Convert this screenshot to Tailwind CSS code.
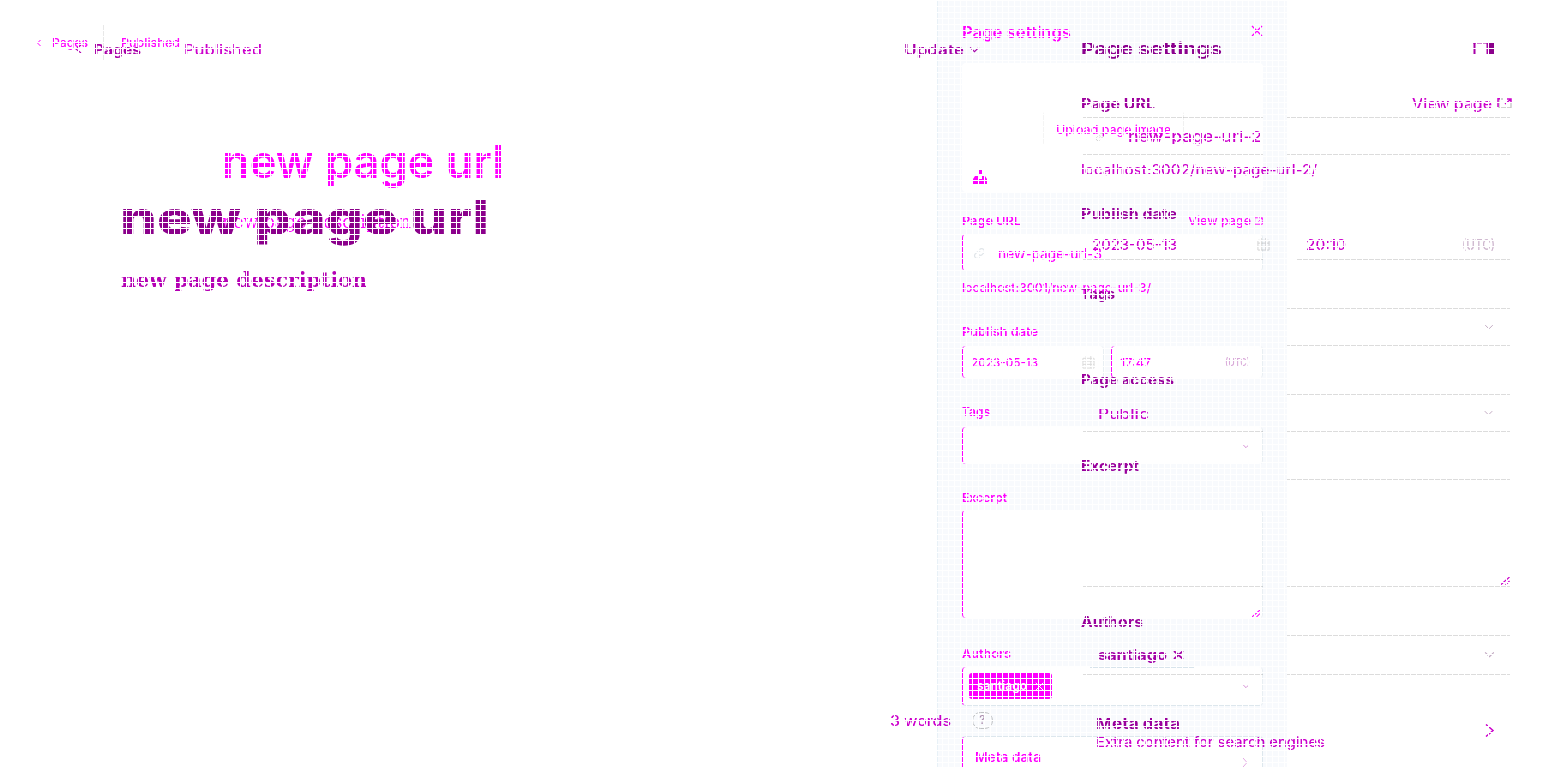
<!DOCTYPE html>
<html lang="en">
<head>
<meta charset="utf-8">
<title>Page settings</title>
<script src="https://cdn.jsdelivr.net/npm/@tailwindcss/browser@4"></script>
</head>
<body class="relative h-[767px] w-[1544px] overflow-hidden bg-white font-['Inter',sans-serif]">

<svg class="hidden">
  <symbol id="down" viewBox="0 0 12 8"><path d="M1 1.5 6 6.5 11 1.5" fill="none" stroke="currentColor" stroke-width="1.3"/></symbol>
  <symbol id="link" viewBox="0 0 14 14"><path d="M6 8a3 3 0 0 0 4 0l2-2a3 3 0 0 0-4-4L7 3M8 6a3 3 0 0 0-4 0L2 8a3 3 0 0 0 4 4l1-1" fill="none" stroke="currentColor" stroke-width="1.3"/></symbol>
  <symbol id="out" viewBox="0 0 14 12"><path d="M6 1H1v10h12V6M8 1h5v4M13 1 7 7" fill="none" stroke="currentColor" stroke-width="1.4"/></symbol>
  <symbol id="out-soft" viewBox="0 0 15 11"><path d="M6 1H2v9h12V5" fill="none" stroke="#c4c4c4" stroke-width="1.300"/><path d="M3 .8H1V9M9 1h5v4M14 1 8 6" fill="none" stroke="currentColor" stroke-width="1.500"/></symbol>
  <symbol id="cal" viewBox="0 0 14 14"><path d="M1 2.5h12v10.500H1zM1 5.500h12M1 9h12M4.500 0v13M9.500 0v13" fill="none" stroke="currentColor"/></symbol>
  <symbol id="x" viewBox="0 0 12 12"><path d="M1 1 11 11M11 1 1 11" fill="none" stroke="currentColor" stroke-width="1.3"/></symbol>
  <symbol id="grip" viewBox="0 0 9 8"><path d="M0 8 9 0M5 8 9 4" fill="none" stroke="currentColor" stroke-width="1.200"/></symbol>
</svg>

<!-- First document: editor and settings panel -->
<div class="absolute inset-0 flex text-[#ff00ff]">
  <main class="w-[937px] shrink-0">
    <div class="mt-[25px] flex h-[35px] items-center pl-[37px] text-[12px] font-medium">
      <svg class="h-[6px] w-[4px]" viewBox="0 0 4 6"><path d="M3.500 0 .5 3l3 3" fill="none" stroke="currentColor"/></svg>
      <span class="ml-[11px] whitespace-nowrap" data-w="36">Pages</span>
      <i class="ml-[15px] h-[35px] w-px bg-[#e8e8e8]"></i>
      <span class="ml-[17px] whitespace-nowrap" data-w="59">Published</span>
    </div>
    <h1 class="mt-[74px] ml-[222px] text-[46px] leading-[54px] font-semibold whitespace-nowrap"><span data-w="282">new page url</span></h1>
    <p class="mt-[24px] ml-[222px] font-['DejaVu_Serif',serif] text-[18px] leading-[20px] whitespace-nowrap"><span data-w="189">new page description</span></p>
  </main>
  <aside class="flex h-[767px] w-[350px] shrink-0 flex-col border-l border-[#e8f1f7] bg-[#f8fafd] pt-[22px] pr-[24px] pl-[24px] text-[12px] font-medium">
    <div class="flex h-5 shrink-0 items-center justify-between text-[16px] font-semibold"><span data-w="109">Page settings</span><svg class="mb-[2px] h-3 w-3"><use href="#x"/></svg></div>
    <div class="mt-[21px] h-[129px] shrink-0 rounded bg-white pt-[48px]">
      <div class="ml-[81px] flex h-[35px] w-[141px] items-center rounded border border-transparent border-r-[#f0f0f0] border-l-[#f4f4f4] pt-[2px] pl-[12px]"><span data-w="115">Upload page image</span></div>
      <svg class="mt-[24px] ml-[11px] h-[14px] w-[14px]" viewBox="0 0 14 14"><path d="M6 0h3v4H6zM2 6h3v3h4V6h3l2 3v5H0V9z" fill="currentColor"/></svg>
    </div>
    <div class="mt-[19px] flex h-5 shrink-0 items-center font-semibold"><span data-w="59">Page URL</span><span class="ml-auto font-medium" data-w="63">View page</span><svg class="ml-[3px] h-[8px] w-[9px]"><use href="#out"/></svg></div>
    <div class="mt-[3px] flex h-[37px] shrink-0 items-center rounded border-r border-l border-r-[#e9eff3] border-l-[#ff00ff] bg-white pt-px pl-[10px] text-[14px]"><svg class="h-[13px] w-[13px] text-[#e0e5e9]"><use href="#link"/></svg><span class="ml-[12px]" data-w="104">new-page-url-3</span></div>
    <div class="mt-[7px] flex h-5 shrink-0 items-center"><span data-w="189">localhost:3001/new-page-url-3/</span></div>
    <div class="mt-[23px] flex h-5 shrink-0 items-center pt-px font-semibold"><span data-w="76">Publish date</span></div>
    <div class="mt-[5px] flex h-[32px] shrink-0 gap-[7px]">
      <div class="flex w-[142px] items-center rounded border-r border-l border-r-[#e9eff3] border-l-[#ff00ff] bg-white pt-px pr-[8px] pl-[8px]"><span data-w="67">2023-05-13</span><svg class="ml-auto h-[13px] w-[13px] text-[#d8d8d8]"><use href="#cal"/></svg></div>
      <div class="flex flex-1 items-center rounded border-r border-l border-r-[#e9eff3] border-l-[#ff00ff] bg-white pt-px pr-[12px] pl-[8px]"><span data-w="31">17:47</span><span class="ml-auto text-[11px] text-[#d8a8d8]" data-w="25">(UTC)</span></div>
    </div>
    <div class="mt-[24px] flex h-5 shrink-0 items-center font-semibold"><span data-w="28">Tags</span></div>
    <div class="mt-[5px] flex h-[37px] shrink-0 items-center justify-end rounded border-r border-l border-r-[#e9eff3] border-l-[#ff00ff] bg-white pr-[12px]"><svg class="h-[6px] w-[8px] text-[#d080d0]"><use href="#down"/></svg></div>
    <div class="mt-[24px] flex h-5 shrink-0 items-center font-semibold"><span data-w="45">Excerpt</span></div>
    <div class="mt-[2px] flex h-[108px] shrink-0 items-end justify-end rounded border-r border-l border-r-[#e9eff3] border-l-[#ff00ff] bg-white pr-[2px] pb-[1px]"><svg class="h-[7px] w-[8px]"><use href="#grip"/></svg></div>
    <div class="mt-[26px] flex h-5 shrink-0 items-center font-semibold"><span data-w="49">Authors</span></div>
    <div class="mt-[3px] flex h-[39px] shrink-0 items-center rounded border-r border-b border-l border-r-[#e9eff3] border-b-[#dde7ed] border-l-[#ff00ff] bg-white pr-[12px] pl-[6px]">
      <div class="flex h-[26px] w-[83px] items-center rounded-[3px] bg-[#ff00ff] pl-[8px] font-semibold text-white"><span data-w="50">santiago</span><svg class="ml-[8px] h-[9px] w-[9px]"><use href="#x"/></svg></div>
      <svg class="ml-auto h-[6px] w-[8px] text-[#d080d0]"><use href="#down"/></svg>
    </div>
    <div class="mt-[30px] flex h-[44px] shrink-0 items-center rounded border border-[#dde7ed] border-l-[#ff00ff] bg-white pr-[14px] pl-[12px] text-[13px] font-semibold"><span data-w="66">Meta data</span><svg class="mt-[8px] ml-auto h-[9px] w-[6px]" viewBox="0 0 6 9"><path d="m1 0 4 4.500L1 9" fill="none" stroke="#e3a8e3"/></svg></div>
  </aside>
</div>

<!-- Second document, blended over the first -->
<div class="absolute inset-0 flex font-medium text-[#cc00cc] mix-blend-multiply">
  <main class="flex h-[767px] w-[1081px] shrink-0 flex-col">
    <div class="mt-[39px] flex h-5 items-center pl-[75px] text-[14px]">
      <svg class="h-[8px] w-[7px]" viewBox="0 0 7 8"><path d="M6 0 1 4l5 4" fill="none" stroke="#b000b0" stroke-width="1.200"/></svg>
      <span class="ml-[12px] font-bold text-[#a800a8]" data-w="47">Pages</span>
      <span class="ml-[43px]" data-w="78">Published</span>
      <span class="ml-[642px] font-semibold text-[#aa00aa]" data-w="60">Update</span>
      <svg class="ml-[5px] h-[7px] w-[11px] text-[#aa00aa]"><use href="#down"/></svg>
    </div>
    <h1 class="mt-[129px] ml-[120px] text-[48px] leading-[60px] font-extrabold whitespace-nowrap text-[#8b008b]"><span data-w="369">new page url</span></h1>
    <p class="mt-[18px] ml-[121px] font-['DejaVu_Serif',serif] text-[20px] leading-[28px] font-bold whitespace-nowrap text-[#b400b4]"><span data-w="246">new page description</span></p>
    <div class="mt-auto mb-[37px] flex h-5 items-center pl-[890px] text-[14px]"><span data-w="61">3 words</span><span class="ml-[21px] flex h-[17px] w-[21px] items-center justify-center rounded-full border border-[#c4c4c4] text-[12px] text-[#b090b0]">?</span></div>
  </main>
  <aside class="flex w-[431px] shrink-0 flex-col text-[14px]">
    <div class="mt-[39px] flex h-5 items-center text-[17px] font-bold text-[#8f008f]"><span class="mt-[2px]" data-w="141">Page settings</span><svg class="mr-[18px] mb-[2px] ml-auto h-[13px] w-[21px]" viewBox="0 0 21 13"><path d="M0 .5h21M1.500 0v13M14.500 0v13" stroke="#a800a8" stroke-width="2"/><path d="M3 12.500h10" stroke="#c8c8c8"/><path d="M16 0h5v13h-5z" fill="#8b008b"/></svg></div>
    <div class="mt-[35px] flex h-5 items-center pb-[2px]"><span class="font-bold text-[#9d009d]" data-w="74">Page URL</span><span class="ml-auto" data-w="80">View page</span><svg class="ml-[5px] h-[11px] w-[15px]"><use href="#out-soft"/></svg></div>
    <div class="mt-[3px] flex h-px justify-between pr-[2px] pl-[2px]"><i class="w-[180px] bg-[#dcdcdc]"></i><i class="w-[223px] bg-[#dcdcdc]"></i></div>
    <div class="flex h-[36px] items-center pt-[2px] pl-[13px] text-[15px]"><svg class="h-[10px] w-[12px] text-[#d0d0d0]"><use href="#link"/></svg><span class="ml-[22px]" data-w="134">new-page-url-2</span></div>
    <div class="flex h-px justify-between pr-[2px] pl-[2px]"><i class="w-[180px] bg-[#dcdcdc]"></i><i class="w-[223px] bg-[#dcdcdc]"></i></div>
    <div class="mt-[5px] flex h-5 items-center pb-[2px]"><span data-w="236">localhost:3002/new-page-url-2/</span></div>
    <div class="mt-[24px] flex h-5 items-center pb-[2px] font-bold text-[#9d009d]"><span data-w="96">Publish date</span></div>
    <div class="mt-[11px] flex h-5 items-center pb-[2px] pl-[11px] pr-[17px]"><span data-w="85">2023-05-13</span><svg class="ml-[79px] h-[13px] w-[15px] text-[#d0d0d0]"><use href="#cal"/></svg><span class="ml-[35px]" data-w="40">20:10</span><span class="ml-auto text-[#cfb8cf]" data-w="33">(UTC)</span></div>
    <div class="mt-[4px] flex h-px justify-between pr-[2px] pl-[2px]"><i class="w-[180px] bg-[#dcdcdc]"></i><i class="w-[213px] bg-[#dcdcdc]"></i></div>
    <div class="mt-[24px] flex h-5 items-center pb-[2px] font-bold text-[#9d009d]"><span data-w="34">Tags</span></div>
    <i class="mt-[4px] mr-[2px] ml-auto h-px w-[223px] bg-[#dcdcdc]"></i>
    <div class="flex h-[36px] items-center justify-end pr-[18px]"><svg class="h-[6px] w-[10px] text-[#c0a8c0]"><use href="#down"/></svg></div>
    <i class="mr-[2px] ml-auto h-px w-[223px] bg-[#dcdcdc]"></i>
    <div class="mt-[24px] flex h-5 items-center pb-[2px] font-bold text-[#9d009d]"><span data-w="93">Page access</span></div>
    <i class="mt-[4px] mr-[2px] ml-auto h-px w-[223px] bg-[#dcdcdc]"></i>
    <div class="flex h-[36px] items-center pr-[18px] pl-[17px]"><span data-w="51">Public</span><svg class="ml-auto h-[6px] w-[11px] text-[#c0a8c0]"><use href="#down"/></svg></div>
    <div class="flex h-px justify-between pr-[2px] pl-[2px]"><i class="w-[180px] bg-[#dcdcdc]"></i><i class="w-[223px] bg-[#dcdcdc]"></i></div>
    <div class="mt-[24px] flex h-5 items-center pb-[2px] font-bold text-[#9d009d]"><span data-w="58">Excerpt</span></div>
    <i class="mt-[3px] mr-[2px] ml-auto h-px w-[223px] bg-[#dcdcdc]"></i>
    <div class="flex h-[106px] items-end justify-end pr-[2px] pb-[1px]"><svg class="h-[8px] w-[10px]"><use href="#grip"/></svg></div>
    <div class="flex h-px justify-between pr-[2px] pl-[2px]"><i class="w-[180px] bg-[#dcdcdc]"></i><i class="w-[223px] bg-[#dcdcdc]"></i></div>
    <div class="mt-[25px] flex h-5 items-center pb-[2px] font-bold text-[#9d009d]"><span data-w="62">Authors</span></div>
    <i class="mt-[3px] mr-[2px] ml-auto h-px w-[223px] bg-[#dcdcdc]"></i>
    <div class="h-[38px]">
      <div class="flex h-[31px] items-center pt-[6px] pr-[16px] pl-[17px] font-bold text-[#a800a8]"><span data-w="69">santiago</span><svg class="ml-[6px] h-[8px] w-[11px]" viewBox="0 0 11 8"><path d="m1 0 9 8M10 0 1 8" stroke="currentColor" stroke-width="1.800"/></svg><svg class="ml-auto h-[7px] w-[13px] text-[#c0a8c0]"><use href="#down"/></svg></div>
      <div class="ml-[9px] h-px w-[104px] bg-[#d8e4ec]"></div>
    </div>
    <div class="flex h-px justify-between pr-[2px] pl-[2px]"><i class="w-[180px] bg-[#dcdcdc]"></i><i class="w-[223px] bg-[#dcdcdc]"></i></div>
    <div class="mt-[39px] flex items-center pr-[17px] pl-[15px]">
      <div><div class="flex h-5 items-center pt-px text-[15px] font-bold text-[#9d009d]"><span data-w="84">Meta data</span></div><div class="-mt-px flex h-5 items-center text-[13px]"><span data-w="229">Extra content for search engines</span></div></div>
      <svg class="mb-[7px] ml-auto h-[13px] w-[10px]" viewBox="0 0 10 13"><path d="m1 .5 7 6-7 6" fill="none" stroke="currentColor" stroke-width="1.500"/></svg>
    </div>
  </aside>
</div>

<!-- White mesh on a six pixel pitch -->
<div class="pointer-events-none absolute inset-0 z-20 bg-[linear-gradient(to_right,#fff_1px,transparent_1px),linear-gradient(to_bottom,#fff_1px,transparent_1px)] bg-[length:6px_6px]"></div>

<script>
// Stretch each label to its set width, again whenever its natural size changes.
const fit = new ResizeObserver(entries => entries.forEach(({ target: el, contentRect }) => {
  const w = contentRect.width, t = +el.dataset.w;
  if (!w) return;
  el.style.transform = `scaleX(${t / w})`;
  el.style.marginRight = `${t - w}px`;
}));
document.querySelectorAll('[data-w]').forEach(el => {
  el.style.display = 'inline-block';
  el.style.whiteSpace = 'nowrap';
  el.style.flexShrink = '0';
  el.style.transformOrigin = 'left center';
  fit.observe(el);
});
</script>
</body>
</html>
